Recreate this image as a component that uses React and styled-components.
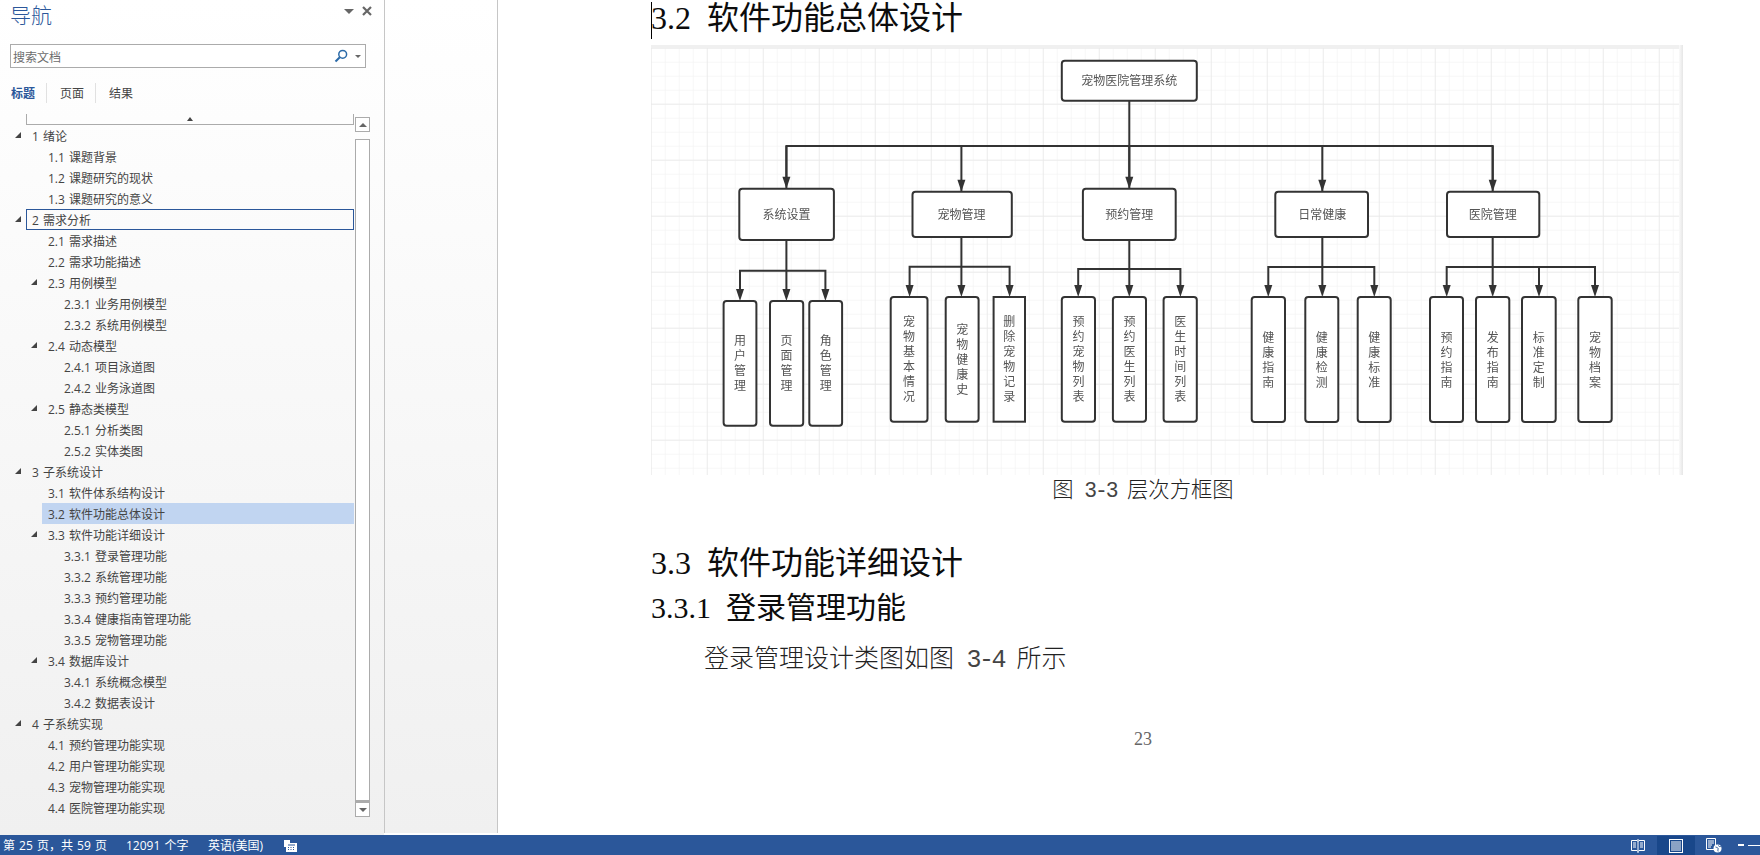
import React from 'react'
import styled, { createGlobalStyle } from 'styled-components'

const Global = createGlobalStyle`
  html, body { margin: 0; padding: 0; height: 100%; overflow: hidden; background: #fff; }
  body { font-family: "Open Sans", "Noto Sans CJK SC", sans-serif; }
`

const Window = styled.div`
  display: flex;
  flex-direction: column;
  width: 1760px;
  height: 855px;
  overflow: hidden;
`
const Main = styled.div`
  flex: 1;
  display: flex;
  min-height: 0;
`
const NavPane = styled.div`
  width: 384px;
  flex: none;
  display: flex;
  flex-direction: column;
  padding-bottom: 2px;
  background: linear-gradient(#ffffff 0, #fdfdfd 120px, #f0f0f0 100%);
`
const Gutter = styled.div`
  width: 112px;
  flex: none;
  border-left: 1px solid #c6c6c6;
  border-right: 1px solid #c6c6c6;
  margin-bottom: 2px;
  background: linear-gradient(#ffffff 0, #fdfdfd 120px, #f0f0f0 100%);
`
const NavHead = styled.div`
  height: 30px;
  display: flex;
  align-items: center;
  padding: 0 12px 0 10px;
  justify-content: space-between;
`
const NavTitle = styled.div`
  font: 300 21px "Noto Sans CJK SC", sans-serif;
  color: #2b579a;
  margin-top: -2px;
`
const HeadIcons = styled.div`
  display: flex;
  align-items: center;
  gap: 8px;
  margin-top: -8px;
`
const SearchBox = styled.div`
  margin: 14px 0 0 10px;
  width: 356px;
  height: 24px;
  box-sizing: border-box;
  border: 1px solid #ababab;
  background: #fff;
  display: flex;
  align-items: center;
  justify-content: space-between;
  padding: 0 4px 0 2px;
  font: 12px "Noto Sans CJK SC", sans-serif;
  color: #6d6d6d;
`
const SearchIcons = styled.div`
  display: flex;
  align-items: center;
  gap: 7px;
`
const Tabs = styled.div`
  display: flex;
  margin: 15px 0 0 11px;
  height: 20px;
  align-items: center;
`
const Tab = styled.div`
  font: ${p => (p.$on ? 700 : 400)} 12px "Noto Sans CJK SC", sans-serif;
  color: ${p => (p.$on ? '#2b579a' : '#444')};
  padding-right: 11px;
  margin-right: 13px;
  height: 20px;
  line-height: 20px;
  border-right: ${p => (p.$last ? 'none' : '1px solid #e1e1e1')};
`
const TreeArea = styled.div`
  flex: 1;
  display: flex;
  margin-top: 11px;
  min-height: 0;
`
const TreeCol = styled.div`
  width: 355px;
  flex: none;
`
const PinBar = styled.div`
  margin-left: 26px;
  width: 326px;
  border: 1px solid #ababab;
  border-top: none;
  display: flex;
  justify-content: center;
  align-items: flex-start;
  padding-top: 3px;
  height: 7px;
`
const Row = styled.div`
  height: 21px;
  display: flex;
  align-items: center;
  position: relative;
  font: 12px "Open Sans", "Noto Sans CJK SC", sans-serif;
  word-spacing: 1px;
  color: #444;
  margin-left: ${p => 26 + p.$level * 16}px;
  width: ${p => 328 - p.$level * 16}px;
  box-sizing: border-box;
  padding-left: 6px;
  padding-right: 2px;
  background: ${p => (p.$sel ? '#c1d5f1' : 'transparent')};
  outline: ${p => (p.$focus ? '1px solid #2b579a' : 'none')};
  outline-offset: -1px;
  white-space: pre;
`
const Twist = styled.span`
  position: absolute;
  left: -11px;
  top: 7px;
  width: 0;
  height: 0;
  border-left: 6px solid transparent;
  border-bottom: 6px solid #444;
`
const Scroll = styled.div`
  width: 15px;
  margin: 3px 0 0 0;
  display: flex;
  flex-direction: column;
  align-items: stretch;
  height: 700px;
`
const ScrollBtn = styled.div`
  height: 15px;
  flex: none;
  box-sizing: border-box;
  border: 1px solid #ababab;
  background: #fff;
  display: flex;
  align-items: center;
  justify-content: center;
`
const ScrollThumb = styled.div`
  flex: 1;
  margin: 7px 0 0;
  border: 1px solid #ababab;
  border-bottom: 2px solid #ababab;
  background: #fff;
`
const Tri = styled.span`
  width: 0;
  height: 0;
  border-left: ${p => p.$w}px solid transparent;
  border-right: ${p => p.$w}px solid transparent;
  ${p => (p.$up ? 'border-bottom' : 'border-top')}: ${p => p.$h}px solid ${p => p.$c || '#666'};
`
const DocArea = styled.div`
  flex: 1;
  min-width: 0;
  padding-left: 153px;
  position: relative;
  color: #111;
`
const Caret = styled.div`
  position: absolute;
  left: 153px;
  top: 2px;
  width: 1px;
  height: 37px;
  background: #000;
`
const Heading = styled.div`
  font: ${p => p.$size}px/${p => p.$line}px "Liberation Serif", "Noto Sans CJK SC", serif;
  margin-top: ${p => p.$top || 0}px;
  height: ${p => p.$line}px;
  white-space: pre;
  color: #0c0c0c;
`
const Figure = styled.div`
  width: 1032px;
  height: 430px;
  margin-top: 8px;
`
const DiagramSvg = styled.svg`
  display: block;
  filter: blur(0.35px);
`
const Caption = styled.div`
  width: 984px;
  text-align: center;
  margin-top: 0;
  height: 26px;
  font: 300 21.33px/26px "Noto Sans CJK SC", sans-serif;
  color: #222;
  white-space: pre;
`
const Para = styled.div`
  margin: 16px 0 0 53px;
  font: 300 25px/28px "Noto Sans CJK SC", sans-serif;
  color: #222;
  white-space: pre;
`
// half-width latin run inside the song-style body text
const Ascii = styled.span`
  font-family: "Liberation Mono", monospace;
  font-weight: 400;
  letter-spacing: -0.1em;
  color: #444;
`
const PageNo = styled.div`
  width: 984px;
  text-align: center;
  margin-top: 53px;
  font: 18px/22px "Liberation Serif", serif;
  color: #666;
`
const StatusBar = styled.div`
  height: 20px;
  flex: none;
  background: #2b579a;
  color: #fff;
  display: flex;
  align-items: center;
  font: 12px "Open Sans", "Noto Sans CJK SC", sans-serif;
  word-spacing: 1px;
  white-space: pre;
`
const StatusText = styled.span`
  width: ${p => p.$w}px;
  flex: none;
  padding-left: ${p => p.$pad || 0}px;
  box-sizing: border-box;
`
const StatusRight = styled.div`
  margin-left: auto;
  display: flex;
  align-items: center;
  height: 20px;
`
const ViewBtn = styled.div`
  width: 38px;
  height: 19px;
  margin-top: 1px;
  display: flex;
  align-items: center;
  justify-content: center;
  background: ${p => (p.$on ? '#19478a' : 'transparent')};
`
const ZoomTrack = styled.div`
  display: flex;
  align-items: center;
  gap: 4px;
  margin-left: 5px;
  width: 22px;
  overflow: hidden;
`
const ZoomMinus = styled.span`
  width: 6px;
  height: 2px;
  background: #fff;
  flex: none;
`
const ZoomLine = styled.span`
  width: 12px;
  height: 1px;
  background: #fff;
  flex: none;
`

const tree = [
  [0, '1 绪论', 1], [1, '1.1 课题背景'], [1, '1.2 课题研究的现状'], [1, '1.3 课题研究的意义'],
  [0, '2 需求分析', 1, 'focus'], [1, '2.1 需求描述'], [1, '2.2 需求功能描述'], [1, '2.3 用例模型', 1],
  [2, '2.3.1 业务用例模型'], [2, '2.3.2 系统用例模型'], [1, '2.4 动态模型', 1],
  [2, '2.4.1 项目泳道图'], [2, '2.4.2 业务泳道图'], [1, '2.5 静态类模型', 1],
  [2, '2.5.1 分析类图'], [2, '2.5.2 实体类图'],
  [0, '3 子系统设计', 1], [1, '3.1 软件体系结构设计'], [1, '3.2 软件功能总体设计', 0, 'sel'], [1, '3.3 软件功能详细设计', 1],
  [2, '3.3.1 登录管理功能'], [2, '3.3.2 系统管理功能'], [2, '3.3.3 预约管理功能'], [2, '3.3.4 健康指南管理功能'], [2, '3.3.5 宠物管理功能'],
  [1, '3.4 数据库设计', 1], [2, '3.4.1 系统概念模型'], [2, '3.4.2 数据表设计'],
  [0, '4 子系统实现', 1], [1, '4.1 预约管理功能实现'], [1, '4.2 用户管理功能实现'], [1, '4.3 宠物管理功能实现'], [1, '4.4 医院管理功能实现'],
]

// diagram coordinates are page pixels, shifted by the figure origin
const OX = 651
const OY = 45
const ROOT_X = 1129.3
const groups = [
  { label: '系统设置', box: [739.3, 188.7, 833.9, 240], cx: 786.4, busY: 270.7, kids: [
    ['用户管理', 740, 723.6, 756.4], ['页面管理', 786.4, 770, 803.2], ['角色管理', 825.4, 809.3, 842.1],
  ], top: 301, bot: 425.7 },
  { label: '宠物管理', box: [912.5, 191.7, 1011.8, 237], cx: 961.4, busY: 266.7, kids: [
    ['宠物基本情况', 909.6, 890.7, 927.5], ['宠物健康史', 961.4, 945.7, 978.6], ['删除宠物记录', 1009.6, 993.6, 1025, 1],
  ], top: 297, bot: 421.7 },
  { label: '预约管理', box: [1082.9, 188.7, 1175.7, 240], cx: ROOT_X, busY: 269, kids: [
    ['预约宠物列表', 1078.2, 1061.8, 1095], ['预约医生列表', ROOT_X, 1112.9, 1146], ['医生时间列表', 1180.4, 1163.6, 1196.8],
  ], top: 297, bot: 421.7 },
  { label: '日常健康', box: [1275.3, 191.7, 1368, 237], cx: 1322.3, busY: 267, kids: [
    ['健康指南', 1268.3, 1251.7, 1285], ['健康检测', 1322.3, 1305.3, 1338.3], ['健康标准', 1374.3, 1357.7, 1390.7],
  ], top: 297, bot: 422 },
  { label: '医院管理', box: [1447, 191.7, 1539.3, 237], cx: 1492.7, busY: 267, kids: [
    ['预约指南', 1446.7, 1430, 1463], ['发布指南', 1492.7, 1476, 1509.3], ['标准定制', 1539, 1522, 1555.7], ['宠物档案', 1595, 1578.3, 1611.7],
  ], top: 297, bot: 422 },
]

const ink = '#333'
const Arrow = ({ x, y }) => (
  <polygon points={`${x - 4},${y - 12} ${x + 4},${y - 12} ${x},${y}`} fill={ink} />
)

const Diagram = () => (
  <DiagramSvg width="1032" height="430" viewBox={`${OX} ${OY} 1032 430`}>
    <defs>
      <pattern id="minor" x={706.8} y={47.7} width="14" height="14" patternUnits="userSpaceOnUse">
        <path d="M0 0V14M0 0H14" stroke="#f0f0f0" strokeWidth="1" fill="none" />
      </pattern>
      <pattern id="major" x={706.8} y={47.7} width="56" height="56" patternUnits="userSpaceOnUse">
        <path d="M0 0V56M0 0H56" stroke="#e9e9e9" strokeWidth="1.4" fill="none" />
      </pattern>
      <linearGradient id="edge" x1="0" x2="1">
        <stop offset="0" stopColor="#fafafa" />
        <stop offset="1" stopColor="#e6e6e6" />
      </linearGradient>
    </defs>
    <rect x={OX} y={OY} width="1032" height="430" fill="#fff" />
    <rect x={OX} y={OY} width="1032" height="430" fill="url(#minor)" />
    <rect x={OX} y={OY} width="1032" height="430" fill="url(#major)" />
    <rect x={OX} y={OY} width="1032" height="3" fill="#f0f0f0" />
    <rect x={OX + 1028} y={OY} width="4" height="430" fill="url(#edge)" />

    <g fill="none" stroke={ink} strokeWidth="2">
      <path d={`M${ROOT_X} 100.7V180M786.4 180V146H1492.7V180`} />
      {groups.map(g => (
        <path key={g.label} d={`M${g.cx} 146V${g.box[1]}M${g.cx} ${g.box[3]}V${g.top - 8}M${g.kids[0][1]} ${g.top - 8}V${g.busY}H${g.kids[g.kids.length - 1][1]}V${g.top - 8}${g.kids.map(k => `M${k[1]} ${g.busY}V${g.top - 8}`).join('')}`} />
      ))}
    </g>
    {groups.map(g => <Arrow key={g.label} x={g.cx} y={g.box[1]} />)}
    {groups.flatMap(g => g.kids.map(k => <Arrow key={k[0]} x={k[1]} y={g.top} />))}

    <g fill="#fff" stroke={ink} strokeWidth="2">
      <rect x="1061.8" y="60.7" width="135" height="40" rx="3" />
      {groups.map(g => (
        <rect key={g.label} x={g.box[0]} y={g.box[1]} width={g.box[2] - g.box[0]} height={g.box[3] - g.box[1]} rx="3" />
      ))}
      {groups.flatMap(g => g.kids.map(k => (
        <rect key={k[0]} x={k[2]} y={g.top} width={k[3] - k[2]} height={g.bot - g.top} rx={k[4] ? 0 : 3} />
      )))}
    </g>

    <g fill="#555" fontFamily='"Noto Sans CJK SC", sans-serif' fontSize="12" textAnchor="middle">
      <text x={ROOT_X} y="85">宠物医院管理系统</text>
      {groups.map(g => (
        <text key={g.label} x={g.cx} y={(g.box[1] + g.box[3]) / 2 + 4.5}>{g.label}</text>
      ))}
      {groups.flatMap(g => g.kids.map(k => {
        const chars = [...k[0]]
        const mid = (k[2] + k[3]) / 2
        const startY = (g.top + g.bot) / 2 - (chars.length - 1) * 7.5 + 4.5
        return chars.map((c, i) => (
          <text key={k[0] + i} x={mid} y={startY + i * 15}>{c}</text>
        ))
      }))}
    </g>
  </DiagramSvg>
)

const BookIcon = () => (
  <svg width="14" height="14" viewBox="0 0 14 14" fill="none" stroke="#fff">
    <path d="M.5 1.500h5.500l1 1 1-1h5.500v10H8l-1 1-1-1H.5zM7 0v14" />
    <path d="M2 4h3M2 6h3M2 8h3M9 4h3M9 6h3M9 8h3" />
  </svg>
)
const PrintIcon = () => (
  <svg width="15" height="14" viewBox="0 0 15 14" fill="none" stroke="#fff">
    <rect x=".5" y=".5" width="13" height="13" />
    <path d="M2 3h10M2 5h10M2 7h10M2 9h10M2 11h10" />
  </svg>
)
const WebIcon = () => (
  <svg width="16" height="15" viewBox="0 0 16 15" fill="none" stroke="#fff">
    <path d="M9 11.500H.5v-11h9V7" />
    <path d="M2 3h6M2 5h6M2 7h4M2 9h3" />
    <circle cx="11.500" cy="10.500" r="4" fill="#fff" stroke="none" />
    <path d="M9.500 9c1 .5 2 .3 2.500 1.200s-.6 2 .2 3.200M12.500 7.500c0 1 1.400 1.300 2.300 1" stroke="#2b579a" />
  </svg>
)
const CalcIcon = () => (
  <svg width="13" height="13" viewBox="0 0 13 13" fill="#fff">
    <path d="M0 1h6v3h7v9H2V8H0z" />
    <path d="M4 6h7M4 8.500h1M6.500 8.500h1M9 8.500h1M4 10.500h1M6.500 10.500h1M9 10.500h1" stroke="#2b579a" />
  </svg>
)
const SearchGlyph = () => (
  <svg width="14" height="14" viewBox="0 0 14 14" fill="none">
    <circle cx="8.700" cy="5.300" r="3.900" stroke="#2b6aa8" strokeWidth="1.500" />
    <path d="M5.800 8.200 1.500 12.500" stroke="#2b6aa8" strokeWidth="2" />
  </svg>
)
const CloseGlyph = () => (
  <svg width="10" height="10" viewBox="0 0 10 10">
    <path d="M1 1l8 8M9 1l-8 8" stroke="#666" strokeWidth="2.200" />
  </svg>
)

const App = () => (
  <Window>
    <Global />
    <Main>
      <NavPane>
        <NavHead>
          <NavTitle>导航</NavTitle>
          <HeadIcons>
            <Tri $w={5} $h={5} />
            <CloseGlyph />
          </HeadIcons>
        </NavHead>
        <SearchBox>
          搜索文档
          <SearchIcons>
            <SearchGlyph />
            <Tri $w={3} $h={3} />
          </SearchIcons>
        </SearchBox>
        <Tabs>
          <Tab $on>标题</Tab>
          <Tab>页面</Tab>
          <Tab $last>结果</Tab>
        </Tabs>
        <TreeArea>
          <TreeCol>
            <PinBar><Tri $up $w={3} $h={4} $c="#444" /></PinBar>
            {tree.map(([level, text, open, state]) => (
              <Row key={text} $level={level} $sel={state === 'sel'} $focus={state === 'focus'}>
                {open ? <Twist /> : null}
                {text}
              </Row>
            ))}
          </TreeCol>
          <Scroll>
            <ScrollBtn><Tri $up $w={4} $h={4} /></ScrollBtn>
            <ScrollThumb />
            <ScrollBtn><Tri $w={4} $h={4} /></ScrollBtn>
          </Scroll>
        </TreeArea>
      </NavPane>
      <Gutter />
      <DocArea>
        <Caret />
        <Heading $size={32} $line={37}>3.2  软件功能总体设计</Heading>
        <Figure><Diagram /></Figure>
        <Caption>图<Ascii> 3-3 </Ascii>层次方框图</Caption>
        <Heading $size={32} $line={37} $top={44}>3.3  软件功能详细设计</Heading>
        <Heading $size={30} $line={37} $top={7}>3.3.1  登录管理功能</Heading>
        <Para>登录管理设计类图如图<Ascii> 3-4 </Ascii>所示</Para>
        <PageNo>23</PageNo>
      </DocArea>
    </Main>
    <StatusBar>
      <StatusText $w={126} $pad={3}>第 25 页，共 59 页</StatusText>
      <StatusText $w={82}>12091 个字</StatusText>
      <StatusText $w={76}>英语(美国)</StatusText>
      <CalcIcon />
      <StatusRight>
        <ViewBtn><BookIcon /></ViewBtn>
        <ViewBtn $on><PrintIcon /></ViewBtn>
        <ViewBtn><WebIcon /></ViewBtn>
        <ZoomTrack><ZoomMinus /><ZoomLine /></ZoomTrack>
      </StatusRight>
    </StatusBar>
  </Window>
)

export default App
